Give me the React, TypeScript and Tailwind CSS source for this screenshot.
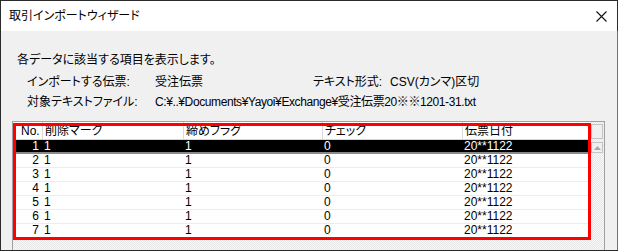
import React from 'react';

const rows = [1, 2, 3, 4, 5, 6, 7];

const cols = ['削除マーク', '締めフラグ', 'チェック', '伝票日付'];

const dots =
  "bg-[repeating-conic-gradient(#e6e6e6_0%_25%,#f9f9f9_0%_50%)] bg-[length:2px_2px]";

const App = () => {
  return (
    <div className="w-[620px] h-[252px] bg-white text-black text-[12px] font-['Liberation_Sans','Noto_Sans_CJK_JP',sans-serif] [font-feature-settings:'palt']">
      <div className="w-[618px] h-[251px] flex flex-col border-l border-t border-b border-[#2b2b2b]">
        {/* title bar */}
        <div className="h-[30px] shrink-0 flex items-center justify-between pl-[8px] pr-[10px] bg-white border-r border-[#2b2b2b]">
          <span className="leading-[14px]">取引インポートウィザード</span>
          <svg width="11" height="11" viewBox="0 0 11 11">
            <path d="M0.5 0.5L10.5 10.5M10.5 0.5L0.5 10.5" stroke="#111" strokeWidth="1.1" />
          </svg>
        </div>

        {/* body */}
        <div className="flex-1 flex flex-col bg-[#f0f0f0] border-r border-[#3b7bd4] pl-[11px] pr-[12px] pt-[21px]">
          <div className="leading-[16px] ml-[5px]">各データに該当する項目を表示します。</div>
          <div className="leading-[16px] ml-[15px] mt-[6px] flex">
            <span className="w-[128px]">インポートする伝票:</span>
            <span className="w-[158px]">受注伝票</span>
            <span className="w-[77px]">テキスト形式:</span>
            <span>CSV(カンマ)区切</span>
          </div>
          <div className="leading-[16px] ml-[15px] mt-[4px] flex">
            <span className="w-[128px]">対象テキストファイル:</span>
            <span className="tracking-[-0.4px]">C:¥..¥Documents¥Yayoi¥Exchange¥受注伝票20※※1201-31.txt</span>
          </div>

          {/* list view */}
          <div className="relative mt-[11px] flex-1 flex border-l border-t border-r border-[#a0a0a0] bg-white">
            <div className="w-[577px] flex flex-col">
              <div className="h-[18px] shrink-0 grid grid-cols-[29px_141px_139px_140px_128px] border-b border-[#d5d5d5] bg-white leading-[16px] overflow-hidden">
                <div className="pl-[8px] pt-[1px]">No.</div>
                {cols.map((c) => (
                  <div key={c} className="pl-[2px] pt-[1px] border-l border-[#d9d9d9]">
                    {c}
                  </div>
                ))}
              </div>
              {rows.map((n) => {
                const sel = n === 1;
                return (
                  <div
                    key={n}
                    className={
                      sel
                        ? 'h-[14px] shrink-0 grid grid-cols-[29px_141px_139px_140px_128px] bg-black text-white border-b-2 border-[#8a8a8a] leading-[12px] overflow-hidden'
                        : 'h-[14px] shrink-0 grid grid-cols-[29px_141px_139px_140px_128px] bg-white border-b border-[#ececec] leading-[13px] overflow-hidden'
                    }
                  >
                    <div className="text-right pr-[3px]">{n}</div>
                    <div className="pl-[2px]">1</div>
                    <div className="pl-[2px]">1</div>
                    <div className="pl-[2px]">0</div>
                    <div className="pl-[2px]">20**1122</div>
                  </div>
                );
              })}
              <div className={`flex-1 ${dots}`} />
            </div>

            {/* vertical scroll bar */}
            <div className={`w-[14px] flex flex-col ${dots}`}>
              <div className="h-[15px] mt-[2px] mx-px border border-[#c4c4c4] bg-[#f0f0f0]" />
              <div className="h-[11px] mt-[3px] mx-px border border-[#c4c4c4] bg-[#f0f0f0] flex items-center justify-center">
                <svg width="7" height="4" viewBox="0 0 7 4">
                  <path d="M0 4L3.5 0L7 4Z" fill="#a8a8a8" />
                </svg>
              </div>
            </div>

            {/* red highlight frame */}
            <div className="absolute left-0 top-[1px] w-[578px] h-[117px] border-[3px] border-[#ff0000] pointer-events-none" />
          </div>
        </div>
      </div>
    </div>
  );
};

export default App;
